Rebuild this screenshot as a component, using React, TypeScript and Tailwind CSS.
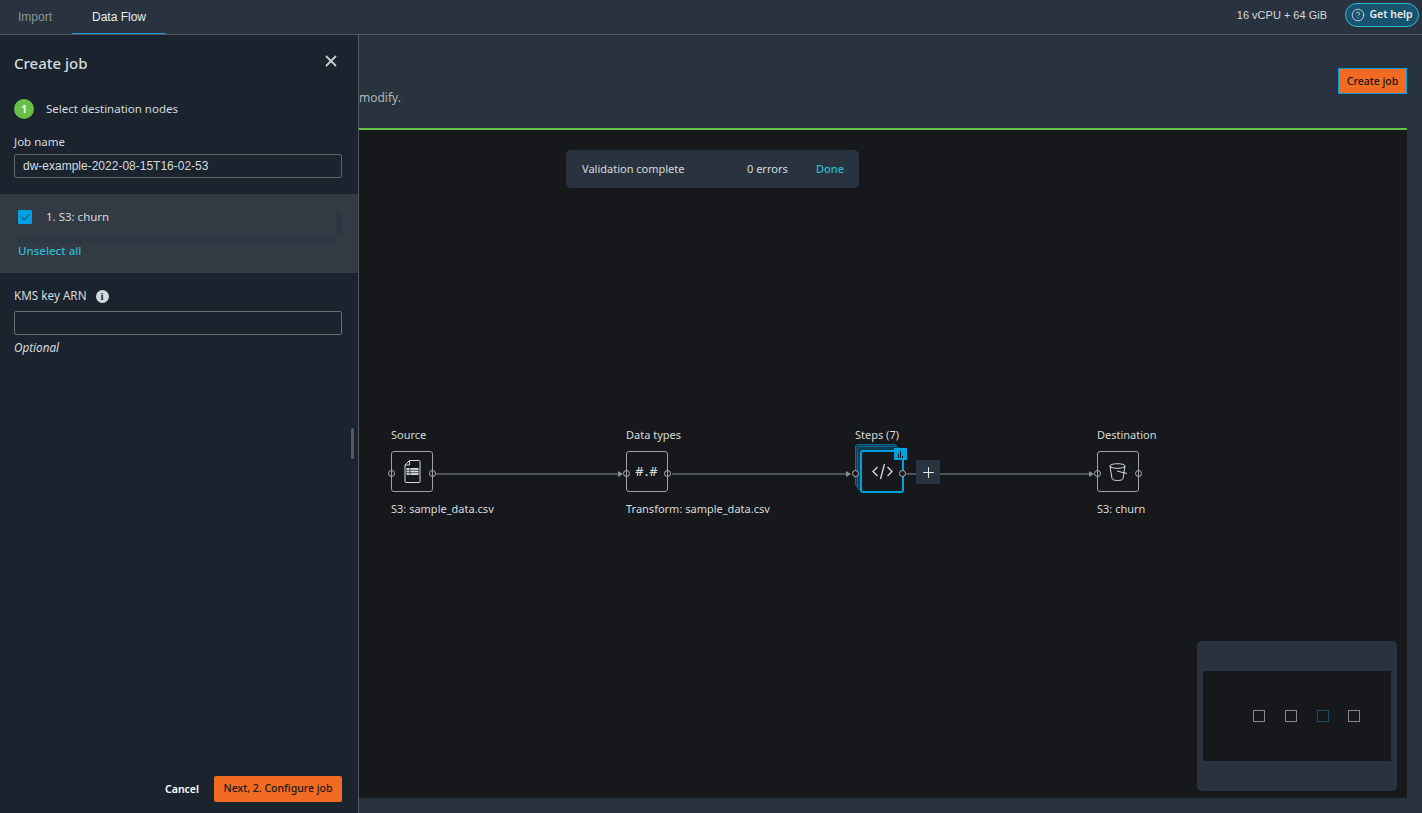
import React from 'react';
import { Check, CircleHelp, Plus, X } from 'lucide-react';

const ember = 'font-["Noto_Sans",sans-serif]';

const FileIcon = () => (
  <svg width="17" height="23" viewBox="0 0 17 23" fill="none" stroke="#d5dbdb" strokeWidth="1">
    <path d="M5.500 .5h9.500a1 1 0 0 1 1 1v20a1 1 0 0 1-1 1H2a1 1 0 0 1-1-1V5z" />
    <path d="M5.500 .5V5H1" />
    <path d="M2.500 8h12v7h-12z" fill="#d5dbdb" stroke="none" />
    <path d="M2.500 10.300h12M2.500 12.700h12M6 8v7" stroke="#16181c" strokeWidth="0.7" />
  </svg>
);

const BucketIcon = () => (
  <svg width="19" height="18" viewBox="0 0 19 18" fill="none" stroke="#d5dbdb" strokeWidth="1">
    <ellipse cx="8.500" cy="3" rx="7.500" ry="2.300" />
    <path d="M1 3l2 12.500c.3 1.300 2.500 2 5.500 2s5.200-.7 5.500-2L16 3" />
    <path d="M8 8l10 2.500" />
  </svg>
);

const Port = ({ className }: { className: string }) => (
  <span className={`absolute top-[18px] h-[7px] w-[7px] rounded-full border border-[#aeb2b6] ${className}`} />
);

const NodeBox = ({ children }: { children: React.ReactNode }) => (
  <div className="relative flex h-[41px] w-[42px] items-center justify-center rounded-[3px] border border-[#9ea2a6] bg-[#16181c]">
    <Port className="left-[-4px]" />
    {children}
    <Port className="right-[-4px]" />
  </div>
);

const Connector = ({ className }: { className: string }) => (
  <div className={`absolute top-[343px] h-[2px] bg-[#4f5358] ${className}`}>
    <span className="absolute right-[-1px] top-[-2px] h-0 w-0 border-y-[3px] border-l-[5px] border-y-transparent border-l-[#8a8f94]" />
  </div>
);

const Minimap = () => (
  <div className="absolute right-[10px] top-[511px] h-[150px] w-[200px] rounded-[5px] bg-[#29333f] px-[6px] pt-[30px]">
    <div className="flex h-[90px] items-center bg-[#16181c] pl-[50px]">
      <span className="h-[12px] w-[12px] border border-[#85888c]" />
      <span className="ml-[20px] h-[12px] w-[12px] border border-[#85888c]" />
      <span className="ml-[20px] h-[12px] w-[12px] border border-[#14506b]" />
      <span className="ml-[19px] h-[12px] w-[12px] border border-[#85888c]" />
    </div>
  </div>
);

const Canvas = () => (
  <div className={`relative flex-1 bg-[#16181c] ${ember} text-[11px] text-[#d5dbdb]`}>
    <div className="absolute left-[207px] top-[20px] flex h-[38px] w-[293px] items-center rounded-[5px] bg-[#29333f] pl-[16px] text-[#d5dbdb]">
      <span className="w-[165px]">Validation complete</span>
      <span className="w-[41px] whitespace-nowrap">0 errors</span>
      <span className="ml-[28px] font-medium text-[#2bbdd3]">Done</span>
    </div>

    <Connector className="left-[77px] w-[186px]" />
    <Connector className="left-[313px] w-[178px]" />
    <Connector className="left-[581px] w-[153px]" />
    <div className="absolute left-[547px] top-[343px] h-[2px] w-[10px] bg-[#4f5358]" />

    <div className="absolute left-[32px] top-[298px]">
      <div className="mb-[9px] h-[14px] leading-[14px]">Source</div>
      <NodeBox><FileIcon /></NodeBox>
      <div className="mt-[10px] h-[14px] whitespace-nowrap leading-[14px]">S3: sample_data.csv</div>
    </div>

    <div className="absolute left-[267px] top-[298px]">
      <div className="mb-[9px] h-[14px] whitespace-nowrap leading-[14px]">Data types</div>
      <NodeBox><span className="text-[13px] font-medium tracking-[1px]">#.#</span></NodeBox>
      <div className="mt-[10px] h-[14px] whitespace-nowrap leading-[14px]">Transform: sample_data.csv</div>
    </div>

    <div className="absolute left-[496px] top-[298px]">
      <div className="mb-[2px] h-[14px] whitespace-nowrap leading-[14px]">Steps (7)</div>
      <div className="relative h-[49px] w-[52px]">
        <span className="absolute left-0 top-0 h-[43px] w-[42px] rounded-[3px] border border-[#0a6d97] bg-[#0f3a50]" />
        <span className="absolute left-[2px] top-[2px] h-[44px] w-[42px] rounded-[3px] border border-[#0a6d97] bg-[#0f3a50]" />
        <div className="absolute left-[5px] top-[6px] flex h-[43px] w-[44px] items-center justify-center rounded-[3px] border-[2px] border-[#00a1e0] bg-[#16181c]">
          <svg width="21" height="17" viewBox="0 0 21 17" fill="none" stroke="#d5dbdb" strokeWidth="1.300">
            <path d="M5.500 4L1 8.500 5.500 13M15.500 4L20 8.500 15.500 13M12.500 1L8.500 16" />
          </svg>
        </div>
        <span className="absolute left-[-3px] top-[26px] h-[7px] w-[7px] rounded-full border border-[#aeb2b6] bg-[#16181c]" />
        <span className="absolute left-[44px] top-[26px] h-[7px] w-[7px] rounded-full border border-[#aeb2b6] bg-[#16181c]" />
        <div className="absolute left-[39px] top-[4px] flex h-[12px] w-[13px] items-end justify-center gap-[1px] bg-[#00a1e0] pb-[2px]">
          <span className="h-[4px] w-[1px] bg-[#16181c]" />
          <span className="h-[7px] w-[1px] bg-[#16181c]" />
          <span className="h-[2px] w-[1px] bg-[#16181c]" />
        </div>
      </div>
    </div>

    <div className="absolute left-[557px] top-[330px] flex h-[24px] w-[24px] items-center justify-center rounded-[2px] bg-[#29333f] text-[#e8eaeb]">
      <Plus size={17} strokeWidth={1.5} />
    </div>

    <div className="absolute left-[738px] top-[298px]">
      <div className="mb-[9px] h-[14px] whitespace-nowrap leading-[14px]">Destination</div>
      <NodeBox><BucketIcon /></NodeBox>
      <div className="mt-[10px] h-[14px] whitespace-nowrap leading-[14px]">S3: churn</div>
    </div>

    <Minimap />
  </div>
);

const CreateJobPanel = () => (
  <aside className={`relative flex w-[359px] shrink-0 flex-col border-r border-[#55595e] bg-[#1b232f] ${ember} text-[12px] text-[#d5dbdb]`}>
    <div className="flex h-[64px] items-start justify-between pl-[14px] pr-[18px] pt-[17px]">
      <h2 className="text-[15px] font-medium leading-[22px]">Create job</h2>
      <X size={18} strokeWidth={2.4} className="text-[#c8cccf]" />
    </div>
    <div className="flex h-[20px] items-center pl-[14px]">
      <span className="flex h-[20px] w-[20px] items-center justify-center rounded-full bg-[#67bf45] text-[10px] font-bold text-white">1</span>
      <span className="ml-[12px] text-[11.500px]">Select destination nodes</span>
    </div>
    <label className="mt-[14px] block h-[18px] pl-[14px] text-[11.500px] leading-[18px]">Job name</label>
    <div className="ml-[14px] mr-[16px] mt-[3px] flex h-[24px] items-center rounded-[2px] border border-[#5f6368] px-[8px] font-['Liberation_Sans',sans-serif] text-[12px] text-[#d5dbdb]">
      dw-example-2022-08-15T16-02-53
    </div>

    <div className="mt-[16px] h-[79px] bg-[#323a44] pl-[18px] pr-[16px] pt-[16px]">
      <div className="flex">
        <div className="flex h-[27px] w-[318px] items-start">
          <span className="flex h-[14px] w-[14px] items-center justify-center rounded-[1px] bg-[#00a1e0]">
            <Check size={11} strokeWidth={2} className="text-[#16181c]" />
          </span>
          <span className="ml-[14px] text-[11.500px] leading-[14px]">1. S3: churn</span>
        </div>
        <div className="h-[27px] w-[6px] bg-[#2b3742]" />
      </div>
      <div className="h-[6px] w-[318px] bg-[#2b3742]" />
      <div className="mt-[1px] text-[11.500px] font-medium leading-[14px] text-[#2bbdd3]">Unselect all</div>
    </div>

    <div className="mt-[15px] flex h-[16px] items-center pl-[14px]">
      <span className="text-[11.700px]">KMS key ARN</span>
      <span className="ml-[9px] flex h-[13px] w-[13px] items-center justify-center rounded-full bg-[#d5dbdb] font-['Liberation_Serif',serif] text-[11px] font-bold leading-none text-[#1b232f]">i</span>
    </div>
    <div className="ml-[14px] mr-[16px] mt-[7px] h-[24px] rounded-[2px] border border-[#6a6e73]" />
    <div className="mt-[4px] pl-[14px] text-[11.700px] italic leading-[16px]">Optional</div>

    <div className="absolute left-[351px] top-[393px] h-[31px] w-[3px] rounded-full bg-[#55595e]" />

    <div className="mt-auto flex h-[37px] items-start justify-end gap-[15px] pr-[16px]">
      <span className="mt-[5px] text-[10.500px] font-semibold leading-[16px] text-white">Cancel</span>
      <button className="h-[26px] w-[128px] rounded-[2px] bg-[#f26b22] text-[10.500px] font-medium text-[#16191f]">Next, 2. Configure job</button>
    </div>
  </aside>
);

export default function App() {
  return (
    <div className="flex h-[813px] w-[1422px] flex-col overflow-hidden bg-[#29333f]">
      <header className="flex h-[35px] shrink-0 items-center border-b border-[#55595e] bg-[#29333f] font-['Liberation_Sans',sans-serif] text-[12px]">
        <span className="w-[72px] pl-[18px] text-[#879596]">Import</span>
        <span className="flex h-[34px] w-[94px] items-center justify-center border-b border-[#1d9bd1] text-[#e8eaeb]">Data Flow</span>
        <span className="mb-[4px] ml-auto text-[11px] text-[#d5dbdb]">16 vCPU + 64 GiB</span>
        <span className={`mb-[4px] ml-[18px] mr-[3px] flex h-[24px] w-[74px] items-center justify-center gap-[4px] rounded-full border border-[#2bbdd3] bg-[#17536e] ${ember} text-[10.500px] font-semibold text-[#e8eaeb]`}>
          <CircleHelp size={14} strokeWidth={1.3} />
          Get help
        </span>
      </header>

      <div className="flex min-h-0 flex-1">
        <CreateJobPanel />
        <main className="flex min-w-0 flex-1 flex-col">
          <div className={`relative mr-[15px] flex h-[95px] shrink-0 items-start justify-between border-b-[2px] border-[#67bf45] ${ember} text-[12px] text-[#aab7b8]`}>
            <span className="mt-[54px]">modify.</span>
            <button className="absolute right-0 top-[33px] h-[26px] w-[69px] border border-[#00a1e0] bg-[#f26b22] pt-[1px] text-[10.500px] font-medium text-[#16191f]">Create job</button>
          </div>
          <div className="flex min-h-0 flex-1">
            <Canvas />
            <div className="w-[15px] shrink-0" />
          </div>
          <div className="h-[15px] shrink-0" />
        </main>
      </div>
    </div>
  );
}
